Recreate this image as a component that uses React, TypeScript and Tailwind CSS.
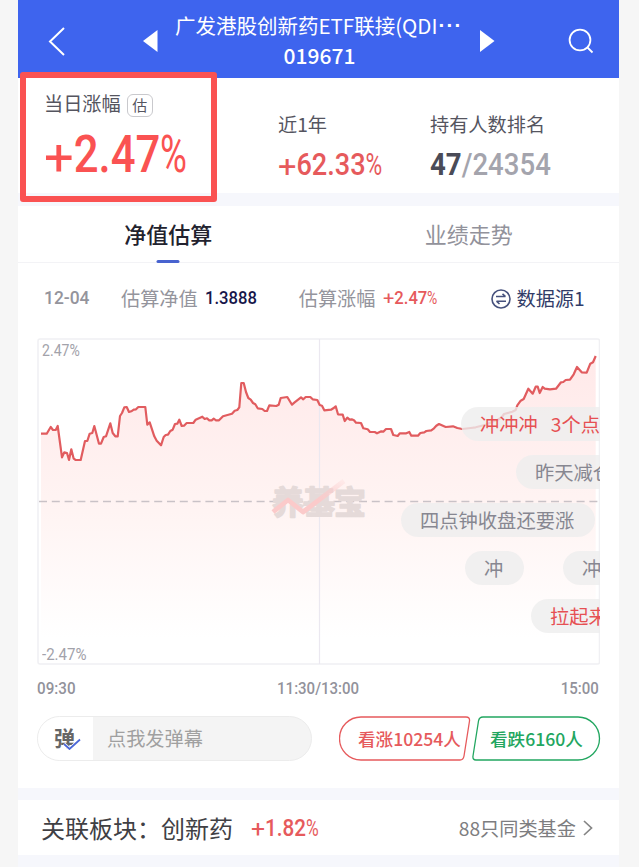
import clsx from "clsx";

const linePoints =
  "4,95.7 9.7,95.7 13.7,89 16,92 18.7,92 20.7,88 25,119.3 27.3,114.3 30,115 32,122 34.3,111.3 36.7,120.7 38.7,122 43.7,122 48,103 50.3,103 52.7,95.7 55.3,95 57.3,88 62,105.7 64,105.7 66.7,99 69,98.3 73.3,85.3 75.7,95 78.3,98.3 80.7,98.3 83,78 85,75 87.3,69.3 89.7,69 92,74 94.3,73.3 96.7,71.7 99,71.3 101.3,69 108.3,69 110.3,86.7 112.7,84.3 117.3,98.3 119.7,102.7 124,107.3 126.7,99 128.7,97 131,96.7 133.3,93 135.7,91.7 138,86 140.3,85.7 142.3,81.7 144.7,88 147,87.7 149.7,85 156.3,85 158.7,81.7 165.3,78.7 167.7,81 170,80.3 172.3,82.3 174.7,82.3 176.7,80.7 179,82.3 182,82.3 186,78.3 195,75.7 197.7,72.7 200.3,72 202.3,69.3 204.3,45 206.7,45 209,54 211.3,60 213.7,61.7 216,65 218.3,66.3 220.7,70.3 225.3,71 227.7,73 230,73 232.3,67.3 239.3,68 241.7,66.7 243.7,60 250.3,59 255,66.7 257.3,64.7 264,59.3 266.3,61.3 268.7,59 273.3,59 275.7,61.3 280.3,62 282.7,67 285,67.7 287.3,72.3 294,71.7 296.3,70.3 298.7,68.3 301,76.3 305.7,76.7 307.7,83 310.3,79.7 312.7,81.7 314.7,81.3 317,82.3 319,84.7 324,85 326.3,90.3 330.7,91.3 333,94 337.7,94 340,95.3 344.3,93.3 346.3,93.7 349,91 354,91 356.3,97 360.7,98 362.7,95.3 369.3,95.3 372.3,94 374.3,97.7 381,97.7 383.3,95 387.3,94.3 389.3,93 394.3,92.3 397,90.3 399.3,87.7 402,86 408.7,89 416,88.3 420.3,90 425.3,91 433.7,90 438.7,89.3 448.7,86.7 455.3,83.7 460.3,82 464.7,79.3 467,76 475.3,73.7 478.7,72 480.3,67.3 483.7,62.7 486.7,61 491.3,50.7 495.7,55.7 498.7,48.7 500.7,48.7 502.7,55 505.7,49 507.7,50.7 513,51.3 519,50.7 524,44.3 526.3,44 528.7,42 533,41.7 536.7,36.3 540,29 544.7,34.3 549.7,34.7 553.3,25.7 556,24.3 558.7,18";

interface Comment {
  text: string;
  box: string;
  hot?: boolean;
}

const comments: Comment[] = [
  { text: "冲冲冲", box: "left-[424px] top-[69px] w-[160px]", hot: true },
  { text: "昨天减仓", box: "left-[479px] top-[117px] w-[120px]" },
  { text: "四点钟收盘还要涨", box: "left-[364px] top-[165px] w-[194px]" },
  { text: "冲", box: "left-[428px] top-[213px] w-[59px]" },
  { text: "冲", box: "left-[526px] top-[213px] w-[59px]" },
  { text: "拉起来", box: "left-[494px] top-[261px] w-[100px]", hot: true },
];

/* Narrow figures: the glyphs are squeezed inside a box of the final width */
function Figure({ children, className, scale }: { children: React.ReactNode; className: string; scale: string }) {
  return (
    <span className={clsx("block whitespace-nowrap font-['Roboto',sans-serif]", className)}>
      <span className={clsx("inline-block", scale)}>{children}</span>
    </span>
  );
}

/* Percentage with a thin wide plus and a slim percent sign */
function Percent({ value, className, scale }: { value: string; className: string; scale: string }) {
  return (
    <Figure className={className} scale={clsx("origin-left", scale)}>
      <span className="inline-block w-[0.68em] origin-left translate-y-[0.06em] scale-x-[1.2] font-normal">+</span>
      {value}
      <span className="inline-block w-[0.6em] origin-left scale-x-[0.84] font-normal">%</span>
    </Figure>
  );
}

function Header() {
  return (
    <header className="flex h-[78px] items-center bg-[#3e64ee] text-white">
      <svg className="ml-[29px] mt-[3px] h-8 w-5 shrink-0" viewBox="0 0 20 32" fill="none" stroke="currentColor" strokeWidth="2">
        <path d="M17 3 3 16.500l14 13.500" />
      </svg>
      <svg className="ml-[75px] mt-1 h-[22px] w-4 shrink-0" viewBox="0 0 16 22" fill="currentColor">
        <path d="M15.500 0v22L1 11z" />
      </svg>
      <div className="ml-[17px] w-[289px] shrink-0 pt-px">
        <h1 className="flex h-[30px] whitespace-nowrap text-[20.5px] leading-[30px]">
          广发港股创新药ETF联接(QDI
          <span className="ml-px font-['Liberation_Sans',sans-serif] font-bold tracking-[1.2px]">···</span>
        </h1>
        <p className="h-[29px] text-center text-[21px] font-medium leading-[30px]">019671</p>
      </div>
      <svg className="ml-[15px] mt-1 h-[22px] w-4 shrink-0" viewBox="0 0 16 22" fill="currentColor">
        <path d="M1 0v22l14.500-11z" />
      </svg>
      <svg className="ml-[73px] mt-1 h-[26px] w-[26px] shrink-0" viewBox="0 0 26 26" fill="none" stroke="currentColor" strokeWidth="1.8">
        <circle cx="12" cy="12" r="10.400" />
        <path d="m19 19 5.500 5.500" />
      </svg>
    </header>
  );
}

function Summary() {
  return (
    <section className="relative flex h-[115px] bg-white text-[19.2px] text-[#55555f]">
      <div className="w-[260px] pl-[26px] pt-3">
        <div className="flex h-[26px] items-center">
          <span>当日涨幅</span>
          <span className="ml-[6px] mt-1 flex h-[23px] w-[26px] items-center justify-center rounded-md border border-[#c9c9cd] text-[15px]">
            估
          </span>
        </div>
        <Percent
          value="2.47"
          className="mt-[11px] h-[56px] text-[52px] font-medium leading-[56px] text-[#fa5252]"
          scale="scale-x-[0.84]"
        />
      </div>
      <div className="w-[152px] pt-8">
        <div className="leading-7">近1年</div>
        <Percent
          value="62.33"
          className="mt-[9px] text-[31px] font-medium leading-9 text-[#e65a5c]"
          scale="scale-x-[0.875]"
        />
      </div>
      <div className="pt-8">
        <div className="leading-7">持有人数排名</div>
        <Figure className="mt-[9px] text-[31px] font-medium leading-9 text-[#a4a4ad]" scale="origin-left scale-x-[0.89]">
          <b className="text-[#4a4b57]">47</b>/24354
        </Figure>
      </div>
      <div className="absolute -top-[6px] left-[2px] h-[130px] w-[197px] rounded-[3px] border-[6px] border-[#fa5252]" />
    </section>
  );
}

function Tabs() {
  return (
    <nav className="flex h-[57px] border-b border-[#f3f3f6] text-center text-[22px] leading-[54px]">
      <div className="relative flex-1 font-medium text-[#22222e]">
        净值估算
        <i className="absolute bottom-[-1px] left-1/2 h-[3px] w-[23px] -translate-x-1/2 rounded-full bg-[#4863cf]" />
      </div>
      <div className="flex-1 text-[#92929b]">业绩走势</div>
    </nav>
  );
}

function Estimate() {
  return (
    <div className="flex h-[75px] items-center pb-[4px] pl-[26px] text-[19.2px] text-[#94949c]">
      <Figure className="w-[77px] text-[18.5px] font-medium" scale="origin-left scale-x-[0.94]">12-04</Figure>
      <span>估算净值</span>
      <Figure className="ml-[7px] w-[94px] text-[18.5px] font-medium text-[#16164a]" scale="origin-left scale-x-[0.9]">
        1.3888
      </Figure>
      <span>估算涨幅</span>
      <Percent
        value="2.47"
        className="ml-[7px] w-[108px] text-[18.5px] font-medium text-[#e65a5c]"
        scale="scale-x-[0.9]"
      />
      <svg className="h-5 w-5 shrink-0" viewBox="0 0 20 20" fill="none" stroke="#46517d" strokeWidth="1.6">
        <circle cx="10" cy="10" r="9" />
        <path d="M5 7.500h9.500M11.500 4.800l3 2.700M15 12.200H5.500M8.500 15l-3-2.800" />
      </svg>
      <span className="ml-[6px] text-[19.2px] text-[#323c68]">数据源1</span>
    </div>
  );
}

function Chart() {
  return (
    <div className="relative ml-[19px] h-[327px] w-[563px] overflow-hidden">
      <svg className="block h-[327px] w-[563px]" viewBox="0 0 563 327" fill="none">
        <defs>
          <linearGradient id="area" x1="0" y1="0" x2="0" y2="1">
            <stop offset="0" stopColor="#ffe9e9" />
            <stop offset="0.55" stopColor="#fff4f3" />
            <stop offset="1" stopColor="#ffffff" />
          </linearGradient>
          <linearGradient id="swoosh" x1="0" y1="1" x2="1" y2="0">
            <stop offset="0.5" stopColor="#fbcaca" />
            <stop offset="1" stopColor="#fbcaca" stopOpacity="0.2" />
          </linearGradient>
        </defs>
        <polygon points={`4,300 ${linePoints} 558.7,300`} fill="url(#area)" />
        <rect x="1" y="1" width="561.500" height="325" rx="2" stroke="#f0f0f3" strokeWidth="1.5" />
        <path d="M282.500 1v325" stroke="#ebe8f0" strokeWidth="1.2" />
        <path d="M2 163.500h559" stroke="#c9c2c7" strokeWidth="1.3" strokeDasharray="8 4.8" />
        <text
          x="235"
          y="176"
          textLength="94"
          fontFamily="Noto Sans CJK SC, sans-serif"
          fontSize="32"
          fontWeight="700"
          fill="#e5dad9"
          stroke="#e5dad9"
          strokeWidth="1.6"
          strokeLinejoin="round"
        >
          养基宝
        </text>
        <path d="m236 174 15-12 15 12 41-31" stroke="url(#swoosh)" strokeWidth="4.800" strokeLinejoin="round" />
        <polyline points={linePoints} stroke="#e15c5f" strokeWidth="2.2" strokeLinejoin="round" />
      </svg>
      <Figure className="absolute left-[5px] top-[3px] text-[16px] leading-5 text-[#a2a2aa]" scale="origin-left scale-x-[0.88]">
        2.47%
      </Figure>
      <Figure className="absolute bottom-0 left-[5px] text-[16px] leading-5 text-[#a2a2aa]" scale="origin-left scale-x-[0.94]">
        -2.47%
      </Figure>
      {comments.map((c, i) => (
        <div
          key={i}
          className={clsx(
            "absolute h-[34px] whitespace-nowrap rounded-full bg-[#eeeeee]/80 pl-[19px] text-[19.3px] leading-[34px]",
            c.box,
            c.hot ? "text-[#e65053]" : "text-[#878791]"
          )}
        >
          {c.text}
          {i === 0 && <span className="ml-[13px]">3个点</span>}
        </div>
      ))}
    </div>
  );
}

function TimeAxis() {
  return (
    <div className="ml-[19px] flex h-[51px] w-[562px] items-center justify-between pb-[2px] text-[16.5px] font-medium text-[#92929b]">
      <Figure className="w-[100px]" scale="origin-left scale-x-[0.92]">09:30</Figure>
      <Figure className="w-[100px] text-center" scale="origin-center scale-x-[0.91]">11:30/13:00</Figure>
      <Figure className="w-[100px] text-right" scale="origin-right scale-x-[0.91]">15:00</Figure>
    </div>
  );
}

function Actions() {
  return (
    <div className="ml-[19px] flex h-[45px]">
      <div className="flex w-[275px] overflow-hidden rounded-full border border-[#ececec] bg-[#f4f4f4]">
        <div className="relative w-[55px] bg-white pl-4 text-[21px] font-bold leading-[40px] text-[#666]">
          弹
          <svg className="absolute left-[25px] top-[21px] h-3 w-[18px]" viewBox="0 0 18 12" fill="none">
            <path d="m1 6 5.500 5L17 1.500" stroke="#fff" strokeWidth="3.500" />
            <path d="m1 6 5.500 5L17 1.500" stroke="#4c68d8" strokeWidth="1.800" />
          </svg>
        </div>
        <div className="pl-[14px] text-[19.2px] leading-[43px] text-[#a0a0a0]">点我发弹幕</div>
      </div>
      <div className="relative ml-[27px] w-[133px] whitespace-nowrap pl-[19px] text-[17.6px] font-medium leading-[46px] text-[#e65a5c]">
        <svg className="absolute inset-0" width="134" height="45" fill="none" stroke="currentColor" strokeWidth="1.3">
          <path d="M22 1h105q4 0 3.500 4l-5.500 35q-.7 4-4 4H22a21.500 21.500 0 0 1 0-43z" />
        </svg>
        看涨10254人
      </div>
      <div className="relative w-[130px] whitespace-nowrap pl-[18px] text-[17.6px] font-medium leading-[46px] text-[#22a660]">
        <svg className="absolute inset-0" width="130" height="45" fill="none" stroke="currentColor" strokeWidth="1.3">
          <path d="M11 1h95a21.500 21.500 0 0 1 0 43H4q-3.500 0-3-4l5.500-35q.7-4 4.500-4z" />
        </svg>
        看跌6160人
      </div>
    </div>
  );
}

function Sector() {
  return (
    <section className="mt-3 flex h-[55px] items-center bg-white pl-[23px] text-[24px] text-[#404044]">
      <span>关联板块：创新药</span>
      <Percent value="1.82" className="ml-[18px] w-[68px] text-[24px] font-medium text-[#e65a5c]" scale="scale-x-[0.86]" />
      <span className="ml-auto pt-px text-[19.2px] text-[#7d7d80]">88只同类基金</span>
      <svg className="ml-[7px] mr-[26px] h-4 w-[10px]" viewBox="0 0 10 16" fill="none" stroke="#858585" strokeWidth="1.7">
        <path d="m1 1 7.500 7L1 15" />
      </svg>
    </section>
  );
}

export default function App() {
  return (
    <div className="h-[867px] overflow-hidden bg-[#f6f6f6] font-['Noto_Sans_CJK_SC',sans-serif]">
      <main className="ml-[18px] h-full w-[601px] bg-[#f6f7fc]">
        <Header />
        <Summary />
        <section className="mt-[13px] h-[582px] bg-white">
          <Tabs />
          <Estimate />
          <Chart />
          <TimeAxis />
          <Actions />
        </section>
        <Sector />
      </main>
    </div>
  );
}
